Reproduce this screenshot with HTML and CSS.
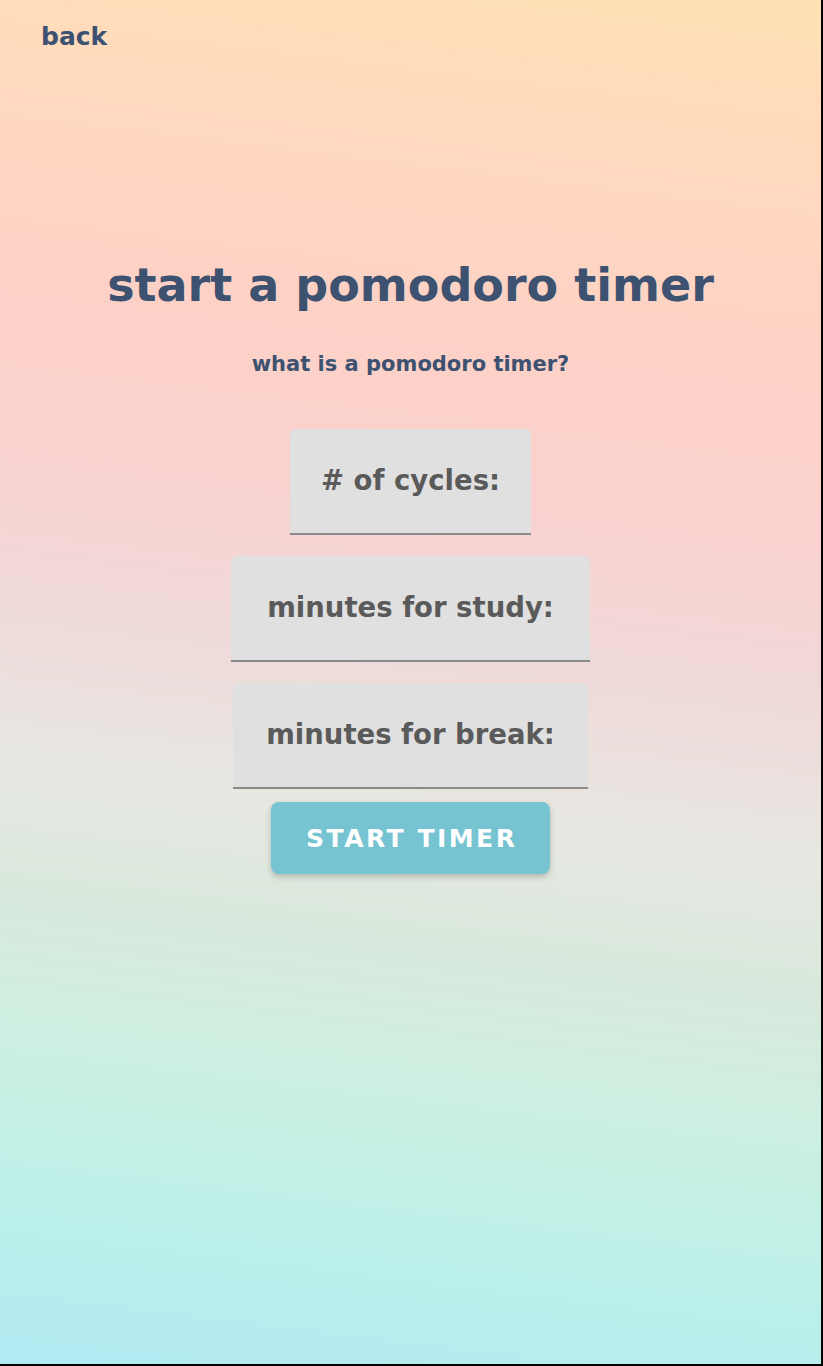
FILE: index.html
```html
<!DOCTYPE html>
<html lang="en">
<head>
<meta charset="utf-8">
<title>start a pomodoro timer</title>
<link rel="stylesheet" href="styles.css">
</head>
<body>
<div class="page">
  <header class="topbar">
    <a class="back" href="#">back</a>
  </header>
  <main class="setup">
    <h1 class="title">start a pomodoro timer</h1>
    <a class="info" href="#">what is a pomodoro timer?</a>
    <form class="fields">
      <label class="field field-cycles"><span># of cycles:</span></label>
      <label class="field field-study"><span>minutes for study:</span></label>
      <label class="field field-break"><span>minutes for break:</span></label>
      <button type="button" class="start">START TIMER</button>
    </form>
  </main>
</div>
</body>
</html>
```
FILE: styles.css
```css
html, body {
  margin: 0;
  padding: 0;
  background: #000;
}
.page {
  width: 821px;
  height: 1364px;
  border-right: 2px solid #000;
  border-bottom: 2px solid #000;
  background: linear-gradient(187deg, #ffe1b4 0%, #ffd8c0 14%, #fdd1c6 26%, #f9d1cf 37%, #efd9d9 48%, #e7e8e2 59%, #dae8dc 67%, #cdefe1 77%, #bdf0e8 88%, #b1eaf3 100%);
  font-family: "DejaVu Sans", "Verdana", sans-serif;
  overflow: hidden;
}
.topbar {
  padding: 17px 0 0 41px;
  height: 43px;
}
.back {
  font-size: 25px;
  font-weight: 700;
  color: #3d5170;
  text-decoration: none;
  line-height: 40px;
}
.setup {
  display: flex;
  flex-direction: column;
  align-items: center;
}
.title {
  margin: 195px 0 0;
  font-size: 46px;
  font-weight: 700;
  line-height: 60px;
  color: #3d5170;
}
.info {
  margin-top: 34px;
  font-size: 21px;
  font-weight: 700;
  color: #3d5170;
  text-decoration: none;
  line-height: 30px;
}
.fields {
  margin-top: 50px;
  display: flex;
  flex-direction: column;
  align-items: center;
}
.field {
  box-sizing: border-box;
  height: 106px;
  margin-bottom: 21px;
  background: #e0e0e0;
  border-radius: 6px 6px 0 0;
  border-bottom: 2px solid #8a8a8a;
  display: flex;
  justify-content: center;
  padding-top: 31px;
  font-size: 27.5px;
  font-weight: 700;
  color: #5a5a5a;
  line-height: 40px;
}
.field-cycles { width: 241px; }
.field-study { width: 359px; }
.field-break { width: 355px; margin-bottom: 13px; }
.start {
  width: 279px;
  height: 72px;
  padding: 0;
  border: none;
  border-radius: 8px;
  background: #76c3d1;
  color: #fff;
  font-family: "DejaVu Sans", "Verdana", sans-serif;
  font-size: 25px;
  font-weight: 700;
  letter-spacing: 2.5px;
  text-indent: 2.5px;
  box-shadow: 0 3px 6px rgba(0, 0, 0, 0.2);
}
```
